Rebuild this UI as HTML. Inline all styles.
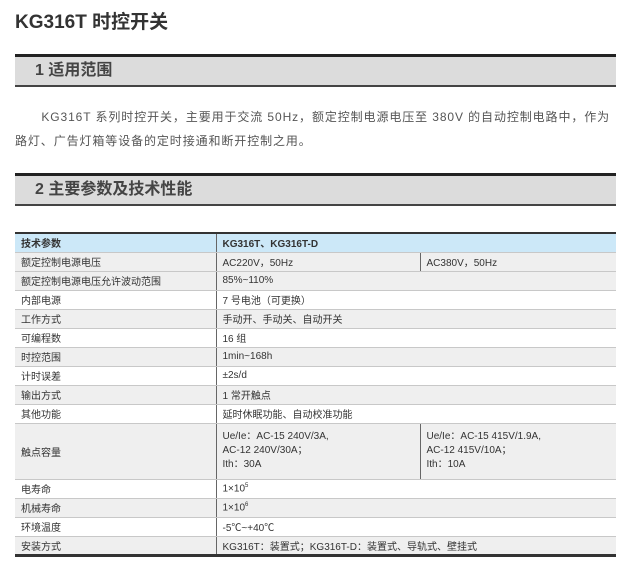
<!DOCTYPE html>
<html><head><meta charset="utf-8"><style>
*{margin:0;padding:0;box-sizing:border-box}
body{width:626px;height:561px;background:#fff;font-family:"Liberation Sans","Noto Sans CJK SC",sans-serif;color:#333;position:relative;overflow:hidden}
h1{position:absolute;left:15px;top:7px;font-size:19px;font-weight:bold;color:#333}
.bar{position:absolute;left:15px;width:601px;height:33px;background:#dcdcdc;border-top:3px solid #222;border-bottom:2px solid #444;font-size:16px;font-weight:bold;color:#444;padding-left:20px;line-height:28px}
p{position:absolute;left:15px;top:105px;width:620px;font-size:12px;line-height:24px;color:#555;text-indent:2.2em;letter-spacing:0.9px;white-space:nowrap}
table{position:absolute;left:15px;top:232px;width:601px;border-collapse:collapse;font-size:10px;color:#333;border-top:2px solid #333;border-bottom:3px solid #333}
td{height:19px;padding:0 6px;border-bottom:1px solid #c8c8c8;border-left:1px solid #666;vertical-align:middle;white-space:nowrap}
td:first-child{border-left:none;width:201px}
tr.g td{background:#efefef}
tr.h td{background:#cce8f8;font-weight:bold}
td.c3{width:196px}
sup{font-size:6px}
</style></head><body>
<h1>KG316T 时控开关</h1>
<div class="bar" style="top:54px">1 适用范围</div>
<p>KG316T 系列时控开关，主要用于交流 50Hz，额定控制电源电压至 380V 的自动控制电路中，作为<br>路灯、广告灯箱等设备的定时接通和断开控制之用。</p>
<div class="bar" style="top:173px">2 主要参数及技术性能</div>
<table>
<tr class="h"><td>技术参数</td><td colspan="2">KG316T、KG316T-D</td></tr>
<tr class="g"><td>额定控制电源电压</td><td>AC220V，50Hz</td><td class="c3">AC380V，50Hz</td></tr>
<tr class="g"><td>额定控制电源电压允许波动范围</td><td colspan="2">85%~110%</td></tr>
<tr><td>内部电源</td><td colspan="2">7 号电池（可更换）</td></tr>
<tr class="g"><td>工作方式</td><td colspan="2">手动开、手动关、自动开关</td></tr>
<tr><td>可编程数</td><td colspan="2">16 组</td></tr>
<tr class="g"><td>时控范围</td><td colspan="2">1min~168h</td></tr>
<tr><td>计时误差</td><td colspan="2">±2s/d</td></tr>
<tr class="g"><td>输出方式</td><td colspan="2">1 常开触点</td></tr>
<tr><td>其他功能</td><td colspan="2">延时休眠功能、自动校准功能</td></tr>
<tr class="g"><td style="height:56px">触点容量</td><td style="line-height:14px">Ue/Ie：AC-15 240V/3A,<br>AC-12 240V/30A；<br>Ith：30A</td><td class="c3" style="line-height:14px">Ue/Ie：AC-15 415V/1.9A,<br>AC-12 415V/10A；<br>Ith：10A</td></tr>
<tr><td>电寿命</td><td colspan="2">1×10<sup>5</sup></td></tr>
<tr class="g"><td>机械寿命</td><td colspan="2">1×10<sup>6</sup></td></tr>
<tr><td>环境温度</td><td colspan="2">-5℃~+40℃</td></tr>
<tr class="g"><td>安装方式</td><td colspan="2">KG316T：装置式；KG316T-D：装置式、导轨式、壁挂式</td></tr>
</table>
</body></html>
